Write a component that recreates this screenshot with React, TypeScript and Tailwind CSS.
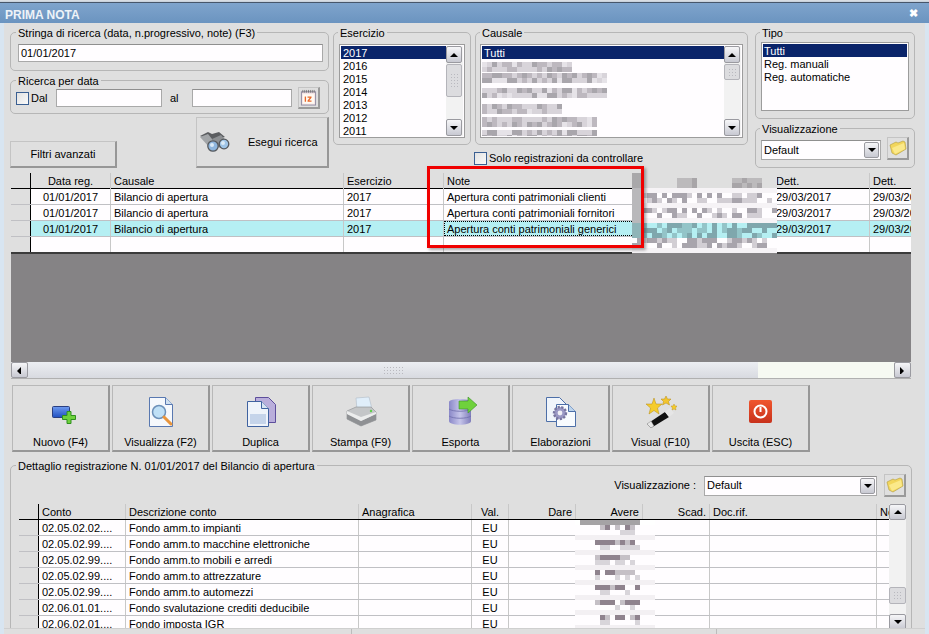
import React from 'react';

const WIN_HEAD = 'grid grid-cols-[20px_80px_233px_100px_190px_70px_69px_97px_41px]';
const DET_HEAD = 'grid grid-cols-[20px_87px_233px_113px_37px_67px_67px_67px_167px_12px]';

function rnd(seed: number) {
  const x = Math.sin(seed * 127.1 + 11.7) * 43758.5453;
  return x - Math.floor(x);
}

// pixelated patches the screenshot uses to hide data
function Mosaic({ cols, rows, size, color, seed }: { cols: number; rows: number; size: number; color: (c: number, r: number, n: number) => string; seed: number }) {
  const cells = [];
  for (let r = 0; r < rows; r++) {
    for (let c = 0; c < cols; c++) {
      cells.push(<div key={r + '-' + c} style={{ width: size, height: size, background: color(c, r, rnd(seed + r * 31 + c * 7)) }} />);
    }
  }
  return <div className="flex flex-wrap" style={{ width: cols * size }}>{cells}</div>;
}

function listBlur(limit: number) {
  return (c: number, r: number, n: number) => {
    if (c >= limit) return '#fffdff';
    if (n > 0.55) return '#d8d4da';
    if (n > 0.3) return '#bdb8bf';
    if (n > 0.12) return '#a9a6ac';
    return '#e6e3e8';
  };
}

function noteBlur(c: number, r: number, n: number) {
  const inHeader = r < 3;
  const inCyan = r >= 10 && r < 13;
  const inBottom = r >= 16;
  if (inBottom) return '#858385';
  if (inHeader) {
    if (c < 2) return '#a9a8aa';
    if (((c > 8 && c < 13) || (c > 19 && c < 26)) && r > 0) return n > 0.5 ? '#a8a5a8' : '#bcbabc';
    return '#dfdfdf';
  }
  if (c < 2 && r < 13) return inCyan ? '#8fb4b8' : '#b9b8bb';
  if (inCyan) return n > 0.65 ? '#7fa7ad' : n > 0.35 ? '#93c4c8' : '#b5eff2';
  if (r % 3 === 0) return '#f6f3f6';
  if (n > 0.7) return '#a8a4ac';
  if (n > 0.45) return '#d2ced4';
  return '#fffdff';
}

function avereBlur(c: number, r: number, n: number) {
  if (r === 0) return c > 0 && c < 13 ? '#a5a3a5' : '#ffffff';
  if (r % 3 === 0) return '#f3f0f3';
  if (c < 4 || c > 12) return '#fffdff';
  if (r % 3 === 1) {
    if (n > 0.6) return '#8f838e';
    if (n > 0.3) return '#c5c0c6';
  }
  return n > 0.6 ? '#d8d5da' : '#fffdff';
}

function Triangle({ dir }: { dir: 'up' | 'down' | 'left' | 'right' }) {
  const pts = { up: '4,1 8,5 0,5', down: '0,1 8,1 4,5', left: '5,0 5,8 1,4', right: '1,0 1,8 5,4' }[dir];
  return (
    <svg width="8" height="8" viewBox="0 0 8 6" className="block">
      <polygon points={pts} fill="#000" />
    </svg>
  );
}

function ScrollBtn({ dir, className }: { dir: 'up' | 'down' | 'left' | 'right'; className: string }) {
  return (
    <div className={'flex items-center justify-center rounded-[2px] border border-[#9a9aa0] bg-gradient-to-b from-[#f6f6f8] to-[#c8c9d2] shrink-0 ' + className}>
      <Triangle dir={dir} />
    </div>
  );
}

function Dots({ cols, rows }: { cols: number; rows: number }) {
  const d = [];
  for (let i = 0; i < cols * rows; i++) d.push(<div key={i} className="w-px h-px bg-[#b9b9bf]" />);
  return <div className="grid gap-[2px]" style={{ gridTemplateColumns: `repeat(${cols}, 1px)` }}>{d}</div>;
}

function VScroll({ thumb }: { thumb: 'long' | 'short' }) {
  return (
    <div className="flex flex-col w-[17px] shrink-0 bg-[#f2f2f2]">
      <ScrollBtn dir="up" className="h-[17px] w-[16px]" />
      {thumb === 'long' ? (
        <div className="h-[33px] w-[16px] mt-px flex items-center justify-center rounded-[2px] border border-[#b4b4ba] bg-[#dcdcdf]"><Dots cols={3} rows={5} /></div>
      ) : (
        <div className="h-[16px] w-[16px] mt-px flex items-center justify-center rounded-[2px] border border-[#b4b4ba] bg-[#dcdcdf]"><Dots cols={3} rows={3} /></div>
      )}
      <div className="flex-1" />
      <ScrollBtn dir="down" className="h-[17px] w-[16px]" />
    </div>
  );
}

function Group({ title, className, wide, children }: { title: string; className: string; wide?: boolean; children: React.ReactNode }) {
  return (
    <fieldset className={'border border-[#b6b6b6] rounded-[5px] min-w-0 ' + className}>
      <legend className={'px-[2px] h-[14px] leading-[16px] whitespace-nowrap ' + (wide ? 'ml-[5px]' : 'ml-[4px]')}>{title}</legend>
      {children}
    </fieldset>
  );
}

function Field({ className, children }: { className: string; children?: React.ReactNode }) {
  return <div className={'border border-[#a9a9a9] border-t-[#8f8f8f] bg-[#fffdff] flex items-center px-[2px] ' + className}>{children}</div>;
}

function Check({ className }: { className?: string }) {
  return <div className={'w-[13px] h-[13px] border border-[#3a5f92] bg-gradient-to-br from-[#e2e2e2] to-[#fafafa] shrink-0 ' + (className || '')} />;
}

function Folder() {
  return (
    <svg width="18" height="16" viewBox="0 0 18 16">
      <path d="M1 5 L7 2 L9 3 L14 1 L16 2 L17 9 L7 15 L3 13 Z" fill="#f2d65c" stroke="#b09a3c" strokeWidth="0.6" />
      <path d="M3 8 L15 3 L16 9 L6 14 Z" fill="#fbe98a" />
    </svg>
  );
}

function FolderBtn() {
  return (
    <div className="w-[22px] h-[23px] flex items-center justify-center bg-[#dfdfdf] border border-[#c4c4c4] border-b-2 border-r-2 border-b-[#9a9a9a] border-r-[#9a9a9a] shrink-0">
      <Folder />
    </div>
  );
}

function Binoculars() {
  return (
    <svg width="32" height="22" viewBox="0 0 32 22">
      <path d="M1 5 L9 1 L13 3 L20 1 L26 6 L16 9 L10 9 Z" fill="#5b5d60" />
      <path d="M1 6 L9 3 L17 13 L11 17 Z" fill="#a2a5a8" />
      <path d="M13 8 L22 4 L27 10 L20 17 Z" fill="#8d9093" />
      <circle cx="14" cy="15" r="5.2" fill="#8fb6de" stroke="#55585c" strokeWidth="1.3" />
      <circle cx="25" cy="13" r="4.8" fill="#9fc4e6" stroke="#55585c" strokeWidth="1.3" />
      <circle cx="13" cy="14" r="2" fill="#dbeaf6" />
      <circle cx="24" cy="12" r="2" fill="#dbeaf6" />
    </svg>
  );
}

function Calendar() {
  return (
    <svg width="17" height="17" viewBox="0 0 18 18">
      <rect x="1.5" y="3" width="15" height="14" fill="#f3e4e6" stroke="#8f8aa0" />
      <path d="M3 1v3M5 1v3M7 1v3M9 1v3M11 1v3M13 1v3M15 1v3" stroke="#5a5a5a" strokeWidth="0.7" />
      <rect x="3" y="5.5" width="12" height="10" fill="#fffaf2" />
      <rect x="5" y="8" width="1.4" height="5.5" fill="#e8672a" />
      <path d="M8 8h4.2v1.2L9.8 12.3h2.4v1.2H8v-1.2l2.4-3.1H8Z" fill="#e8672a" />
    </svg>
  );
}

const Doc = ({ x, y, w, h, stroke, fill }: { x: number; y: number; w: number; h: number; stroke: string; fill: string }) => (
  <path d={`M${x} ${y} h${w - 7} l7 7 v${h - 7} h-${w} Z`} fill={fill} stroke={stroke} strokeWidth="1" />
);

const icons: Record<string, React.ReactNode> = {
  nuovo: (
    <>
      <defs>
        <linearGradient id="nb" x1="0" y1="0" x2="0" y2="1"><stop offset="0" stopColor="#6f9bf0" /><stop offset="1" stopColor="#1f4fc0" /></linearGradient>
      </defs>
      <rect x="7.5" y="10.5" width="17" height="11" rx="1" fill="url(#nb)" stroke="#2a3f80" />
      <path d="M22 15.5h4v4h4.5v4H26v4h-4v-4h-4.5v-4H22Z" fill="#6ed13c" stroke="#2f8f1e" />
    </>
  ),
  visualizza: (
    <>
      <Doc x={4.5} y={1.5} w={23} h={29} stroke="#5878b0" fill="#f5f8fc" />
      <path d="M20.5 1.5v7h7" fill="#cfe0f0" stroke="#5878b0" />
      <circle cx="14" cy="16" r="6.5" fill="#bfe0f6" stroke="#6c90b8" strokeWidth="1.5" />
      <path d="M19 21 L26 28" stroke="#e8953c" strokeWidth="3" strokeLinecap="round" />
    </>
  ),
  duplica: (
    <>
      <Doc x={10.5} y={1.5} w={20} h={25} stroke="#5d4e9c" fill="#b9aedb" />
      <Doc x={2.5} y={5.5} w={21} h={25} stroke="#3f62a0" fill="#eef3fa" />
      <rect x="5" y="18" width="16" height="10" fill="#c5d4ea" />
      <path d="M16.5 5.5v7h7" fill="#d7e4f2" stroke="#3f62a0" />
    </>
  ),
  stampa: (
    <>
      <path d="M11 2 L24 1 L27 13 L12 14 Z" fill="#e0eefa" stroke="#b0bcc8" strokeWidth="0.6" />
      <path d="M2 15 L11 11 L26 11 L31 16 L31 24 L16 30 L2 23 Z" fill="#c4c6c8" stroke="#8b8d90" strokeWidth="0.6" />
      <path d="M2 18 L16 25 L31 18 L31 24 L16 30 L2 23 Z" fill="#8f9194" />
      <path d="M2 15 L16 21 L31 16 L31 18 L16 25 L2 18 Z" fill="#eceded" />
      <circle cx="26" cy="15" r="1.2" fill="#5fcf4a" />
    </>
  ),
  esporta: (
    <>
      <defs>
        <linearGradient id="db" x1="0" y1="0" x2="1" y2="0"><stop offset="0" stopColor="#8a88c8" /><stop offset="0.5" stopColor="#c6c5ea" /><stop offset="1" stopColor="#7f7dbb" /></linearGradient>
      </defs>
      <path d="M4 6 C4 2 26 2 26 6 V25 C26 30 4 30 4 25 Z" fill="url(#db)" />
      <path d="M4 13 C8 16 22 16 26 13 M4 20 C8 23 22 23 26 20" fill="none" stroke="#6f6dab" strokeWidth="0.8" />
      <path d="M14 5 H23 V1 L32 9 L23 17 V13 H14 Z" fill="#6fd13c" stroke="#3a8f28" strokeWidth="0.6" />
    </>
  ),
  elaborazioni: (
    <>
      <Doc x={1.5} y={1.5} w={20} h={24} stroke="#4d6fa8" fill="#f0f5fb" />
      <Doc x={11.5} y={8.5} w={19} h={22} stroke="#4d6fa8" fill="#f8fbfe" />
      <path d="M23.5 8.5v7h7" fill="#bcd4ec" stroke="#4d6fa8" />
      <circle cx="15" cy="17" r="6" fill="#9a98c4" stroke="#77759f" strokeWidth="2.4" strokeDasharray="2.2 1.4" />
      <circle cx="15" cy="17" r="2.4" fill="#f0f0f6" />
    </>
  ),
  visual: (
    <>
      <path d="M2 28 L20 16 L24 21 L6 32 Z" fill="#111" />
      <path d="M2 28 L6 25 L9 30 L6 32 Z" fill="#e6e6e6" stroke="#999" strokeWidth="0.4" />
      <path d="M20 16 L25 12 L29 17 L24 21 Z" fill="#e6e6e6" />
      <polygon points="9,2 11,8 17,8 12.5,12 14,18 9,14.5 4,18 5.5,12 1,8 7,8" fill="#f5cc2c" stroke="#b58a14" strokeWidth="0.5" />
      <polygon points="21,0 22.5,3 26,3 23.5,5.5 24.5,9 21,7 17.5,9 18.5,5.5 16,3 19.5,3" fill="#f3c52e" stroke="#b58a14" strokeWidth="0.5" />
      <polygon points="29,8 30,10 32,10 30.5,12 31,14 29,13 27,14 27.5,12 26,10 28,10" fill="#f5cc2c" stroke="#b58a14" strokeWidth="0.4" />
    </>
  ),
  uscita: (
    <>
      <defs>
        <linearGradient id="ur" x1="0" y1="0" x2="0" y2="1"><stop offset="0" stopColor="#f0562e" /><stop offset="1" stopColor="#c8321c" /></linearGradient>
      </defs>
      <rect x="4" y="4" width="23" height="23" rx="2" fill="url(#ur)" />
      <circle cx="15.5" cy="15.5" r="6" fill="none" stroke="#fff" strokeWidth="2" />
      <path d="M15.5 11 V16" stroke="#fff" strokeWidth="2" />
    </>
  ),
};

function ToolBtn({ icon, label }: { icon: string; label: string }) {
  return (
    <div className="w-[98px] h-[67px] flex flex-col items-center pt-[10px] bg-[#dfdfdf] border border-[#b8b8b8] border-b-2 border-r-2 border-b-[#979797] border-r-[#979797]">
      <svg width="32" height="32" viewBox="0 0 32 32" className="shrink-0">{icons[icon]}</svg>
      <div className="mt-[8px] leading-[13px]">{label}</div>
    </div>
  );
}

function HCell({ children, className }: { children?: React.ReactNode; className?: string }) {
  return <div className={'px-[3px] truncate border-r border-[#c8c8c8] ' + (className || '')}>{children}</div>;
}

const years = ['2017', '2016', '2015', '2014', '2013', '2012', '2011'];

const detailRows = [
  ['02.05.02.02....', 'Fondo amm.to impianti'],
  ['02.05.02.99....', 'Fondo amm.to macchine elettroniche'],
  ['02.05.02.99....', 'Fondo amm.to mobili e arredi'],
  ['02.05.02.99....', 'Fondo amm.to attrezzature'],
  ['02.05.02.99....', 'Fondo amm.to automezzi'],
  ['02.06.01.01....', 'Fondo svalutazione crediti deducibile'],
  ['02.06.02.01....', 'Fondo imposta IGR'],
];

const mainRows = [
  { note: 'Apertura conti patrimoniali clienti', on: false },
  { note: 'Apertura conti patrimoniali fornitori', on: false },
  { note: 'Apertura conti patrimoniali generici', on: true },
];

export default function App() {
  return (
    <div className="relative w-[929px] h-[634px] overflow-hidden flex flex-col bg-[#dfdfdf] text-[11px] leading-[13px] text-black font-['Liberation_Sans',sans-serif]">
      <div className="h-[3px] bg-[#c9d2dc] border-t border-b border-t-[#d8dde3] border-b-[#47566a]" />
      <div className="h-[20px] flex items-center justify-between pl-[5px] pr-[11px] bg-gradient-to-b from-[#7fa4cc] to-[#6b94c0] text-[#eef3f8] font-bold text-[12px]">
        <span className="pt-[4px]">PRIMA NOTA</span>
        <span className="w-[9px] h-[9px] flex items-center justify-center text-white text-[11px]">✖</span>
      </div>

      <div className="flex-1 min-h-0 flex flex-col border-x-4 border-[#d8e5f1] pl-[6px] pt-[2px]">
        {/* filtri */}
        <div className="flex items-start h-[143px]">
          <div className="w-[319px] flex flex-col">
            <Group wide title="Stringa di ricerca (data, n.progressivo, note) (F3)" className="h-[46px]">
              <div className="px-[7px]">
                <Field className="h-[18px] mt-[5px] w-[305px]">01/01/2017</Field>
              </div>
            </Group>
            <Group wide title="Ricerca per data" className="h-[41px] mt-[2px]">
              <div className="flex items-center h-[22px] pl-[5px]">
                <Check />
                <span className="ml-[2px] w-[25px]">Dal</span>
                <Field className="h-[18px] w-[106px]" />
                <span className="ml-[8px] w-[22px]">al</span>
                <Field className="h-[18px] w-[100px]" />
                <div className="ml-[6px] w-[22px] h-[22px] flex items-center justify-center bg-[#dfdfdf] border border-[#c4c4c4] border-b-2 border-r-2 border-b-[#9a9a9a] border-r-[#9a9a9a]"><Calendar /></div>
              </div>
            </Group>
            <div className="mt-[3px] flex items-end justify-between h-[51px]">
              <div className="w-[107px] h-[27px] flex items-center justify-center bg-[#dfdfdf] border border-[#c4c4c4] border-b-2 border-r-2 border-b-[#979797] border-r-[#979797]">Filtri avanzati</div>
              <div className="w-[133px] h-[51px] flex items-center pl-[2px] bg-[#dfdfdf] border border-[#c4c4c4] border-b-2 border-r-2 border-b-[#979797] border-r-[#979797]">
                <Binoculars />
                <span className="ml-[17px]">Esegui ricerca</span>
              </div>
            </div>
          </div>

          <Group title="Esercizio" className="ml-[4px] w-[138px] h-[120px]">
            <div className="px-[5px]">
              <div className="mt-[5px] h-[94px] flex border border-[#9c9c9c] bg-[#fffdff] p-px">
                <div className="flex-1 min-w-0">
                  {years.map((y, i) => (
                    <div key={y} className={'h-[13px] leading-[15px] px-[2px] ' + (i === 0 ? 'bg-[#0a246a] text-white' : '')}>{y}</div>
                  ))}
                </div>
                <VScroll thumb="long" />
              </div>
            </div>
          </Group>

          <div className="ml-[4px] w-[273px] flex flex-col">
            <Group title="Causale" className="h-[120px]">
              <div className="px-[4px]">
                <div className="mt-[5px] h-[94px] flex border border-[#9c9c9c] bg-[#fffdff] p-px">
                  <div className="flex-1 min-w-0 overflow-hidden">
                    <div className="h-[13px] leading-[15px] px-[2px] bg-[#0a246a] text-white">Tutti</div>
                    <div className="mt-[3px]"><Mosaic cols={26} rows={2} size={5} seed={3} color={listBlur(18)} /></div>
                    <div className="mt-[1px]"><Mosaic cols={26} rows={2} size={5} seed={9} color={listBlur(25)} /></div>
                    <div className="mt-[5px]"><Mosaic cols={26} rows={2} size={5} seed={15} color={listBlur(25)} /></div>
                    <div className="mt-[6px]"><Mosaic cols={26} rows={2} size={5} seed={21} color={listBlur(16)} /></div>
                    <div className="mt-[3px]"><Mosaic cols={26} rows={2} size={5} seed={27} color={listBlur(23)} /></div>
                    <div className="mt-[3px]"><Mosaic cols={26} rows={2} size={5} seed={33} color={listBlur(23)} /></div>
                  </div>
                  <VScroll thumb="short" />
                </div>
              </div>
            </Group>
            <div className="mt-[7px] -ml-px flex items-center">
              <Check className="border-[#2c5f9e]" />
              <span className="ml-[2px]">Solo registrazioni da controllare</span>
            </div>
          </div>

          <div className="ml-[7px] w-[160px] flex flex-col">
            <Group title="Tipo" className="h-[94px]">
              <div className="px-[5px]">
                <div className="mt-[3px] h-[69px] border border-[#9c9c9c] bg-[#fffdff] p-px leading-[15px]">
                  <div className="h-[13px] px-[1px] bg-[#0a246a] text-white">Tutti</div>
                  <div className="h-[13px] px-[1px]">Reg. manuali</div>
                  <div className="h-[13px] px-[1px]">Reg. automatiche</div>
                </div>
              </div>
            </Group>
            <Group title="Visualizzazione" className="h-[47px] mt-[2px]">
              <div className="flex items-start px-[5px] pt-[2px]">
                <Field className="h-[20px] w-[120px] mt-[3px] justify-between pr-px">
                  <span>Default</span>
                  <ScrollBtn dir="down" className="h-[16px] w-[15px]" />
                </Field>
                <div className="ml-[6px]"><FolderBtn /></div>
              </div>
            </Group>
          </div>
        </div>

        {/* griglia registrazioni */}
        <div className="mt-[5px] ml-px w-[900px] flex flex-col">
          <div className={WIN_HEAD + ' h-[16px] bg-[#dfdfdf] border-b border-black leading-[16px]'}>
            <div className="border-r border-black" />
            <HCell className="text-center">Data reg.</HCell>
            <HCell>Causale</HCell>
            <HCell>Esercizio</HCell>
            <HCell>Note</HCell>
            <HCell />
            <HCell />
            <HCell>Dett.</HCell>
            <div className="px-[3px]">Dett.</div>
          </div>
          {mainRows.map((r, i) => (
            <div key={i} className={WIN_HEAD + ' h-[16px] border-b border-[#c0c0c4] leading-[16px] ' + (r.on ? 'bg-[#b5eff3]' : 'bg-[#fffdff]')}>
              <div className="bg-[#dfdfdf] border-r border-black" />
              <HCell className="text-center">01/01/2017</HCell>
              <HCell>Bilancio di apertura</HCell>
              <HCell>2017</HCell>
              <div className={'px-[3px] truncate border-r border-[#c8c8c8] ' + (r.on ? 'outline outline-1 -outline-offset-1 outline-dotted outline-black' : '')}>{r.note}</div>
              <HCell />
              <HCell />
              <HCell>29/03/2017</HCell>
              <div className="px-[3px] whitespace-nowrap overflow-hidden">29/03/2017</div>
            </div>
          ))}
          <div className={WIN_HEAD + ' h-[17px] bg-[#fffdff] border-b-2 border-[#3b3b3b]'}>
            <div className="bg-[#dfdfdf] border-r border-black" />
            <HCell /><HCell /><HCell /><HCell /><HCell /><HCell /><HCell /><div />
          </div>
          <div className="h-[108px] bg-[#858385]" />
          <div className="h-[17px] flex border-b border-[#b0b0b0]">
            <ScrollBtn dir="left" className="w-[17px] h-[16px]" />
            <div className="w-[730px] flex items-center justify-center bg-gradient-to-b from-[#eceef2] to-[#d8dae0]"><Dots cols={7} rows={3} /></div>
            <div className="flex-1 bg-[#f6f9f2]" />
            <ScrollBtn dir="right" className="w-[17px] h-[16px]" />
          </div>
        </div>

        {/* comandi */}
        <div className="mt-[6px] ml-[2px] flex gap-[2px]">
          <ToolBtn icon="nuovo" label="Nuovo (F4)" />
          <ToolBtn icon="visualizza" label="Visualizza (F2)" />
          <ToolBtn icon="duplica" label="Duplica" />
          <ToolBtn icon="stampa" label="Stampa (F9)" />
          <ToolBtn icon="esporta" label="Esporta" />
          <ToolBtn icon="elaborazioni" label="Elaborazioni" />
          <ToolBtn icon="visual" label="Visual (F10)" />
          <ToolBtn icon="uscita" label="Uscita (ESC)" />
        </div>

        {/* dettaglio */}
        <Group wide title="Dettaglio registrazione N. 01/01/2017 del Bilancio di apertura" className="mt-[6px] w-[902px] h-[190px] shrink-0">
          <div className="pl-[8px] pr-[5px]">
            <div className="mt-px h-[25px] flex items-center justify-end leading-[15px]">
              <span className="mr-[8px]">Visualizzazione :</span>
              <Field className="h-[20px] w-[173px] justify-between pr-px">
                <span>Default</span>
                <ScrollBtn dir="down" className="h-[16px] w-[15px]" />
              </Field>
              <div className="ml-[7px]"><FolderBtn /></div>
            </div>
            <div className="mt-[6px] flex h-[126px]">
              <div className="w-[870px] shrink-0">
                <div className={DET_HEAD + ' h-[16px] bg-[#dfdfdf] border-b border-black leading-[17px]'}>
                  <div className="border-r border-black" />
                  <HCell>Conto</HCell>
                  <HCell>Descrizione conto</HCell>
                  <HCell>Anagrafica</HCell>
                  <HCell className="text-center">Val.</HCell>
                  <HCell className="text-right">Dare</HCell>
                  <HCell className="text-right">Avere</HCell>
                  <HCell className="text-right">Scad.</HCell>
                  <HCell>Doc.rif.</HCell>
                  <div className="pl-[3px] overflow-hidden">No</div>
                </div>
                {detailRows.map((r, i) => (
                  <div key={i} className={DET_HEAD + ' h-[16px] bg-[#fffdff] border-b border-[#c0c0c4] leading-[17px]'}>
                    <div className="bg-[#dfdfdf] border-r border-black" />
                    <HCell>{r[0]}</HCell>
                    <HCell>{r[1]}</HCell>
                    <HCell />
                    <HCell className="text-center">EU</HCell>
                    <HCell />
                    <HCell />
                    <HCell />
                    <HCell />
                    <div />
                  </div>
                ))}
              </div>
              <VScrollDetail />
            </div>
          </div>
        </Group>
      </div>

      {/* parti oscurate nel riferimento */}
      <div className="absolute left-[632px] top-[173px]">
        <Mosaic cols={29} rows={17} size={5} seed={5} color={noteBlur} />
      </div>
      <div className="absolute left-[575px] top-[520px]">
        <Mosaic cols={16} rows={22} size={5} seed={41} color={avereBlur} />
      </div>

      {/* evidenziazione rossa */}
      <div className="absolute left-[427px] top-[166px] w-[217px] h-[82px] border-[3px] border-[#f00000] shadow-[2px_2px_3px_rgba(0,0,0,0.35)]" />

      {/* barra di stato */}
      <div className="absolute left-[4px] right-[4px] bottom-0 h-[6px] flex gap-[2px] bg-[#dfdfdf] border-t border-[#cfcfcf]">
        <div className="w-[348px] border-r border-[#bcbcbc]" />
        <div className="w-[363px] border-r border-[#bcbcbc]" />
      </div>
    </div>
  );
}

function VScrollDetail() {
  return (
    <div className="flex flex-col w-[17px] shrink-0 bg-[#f2f2f2]">
      <ScrollBtn dir="up" className="h-[16px] w-[17px]" />
      <div className="h-[67px]" />
      <div className="h-[17px] w-[17px] flex items-center justify-center rounded-[2px] border border-[#b4b4ba] bg-[#dcdcdf]"><Dots cols={3} rows={3} /></div>
      <div className="h-[10px]" />
      <ScrollBtn dir="down" className="h-[16px] w-[17px]" />
    </div>
  );
}
